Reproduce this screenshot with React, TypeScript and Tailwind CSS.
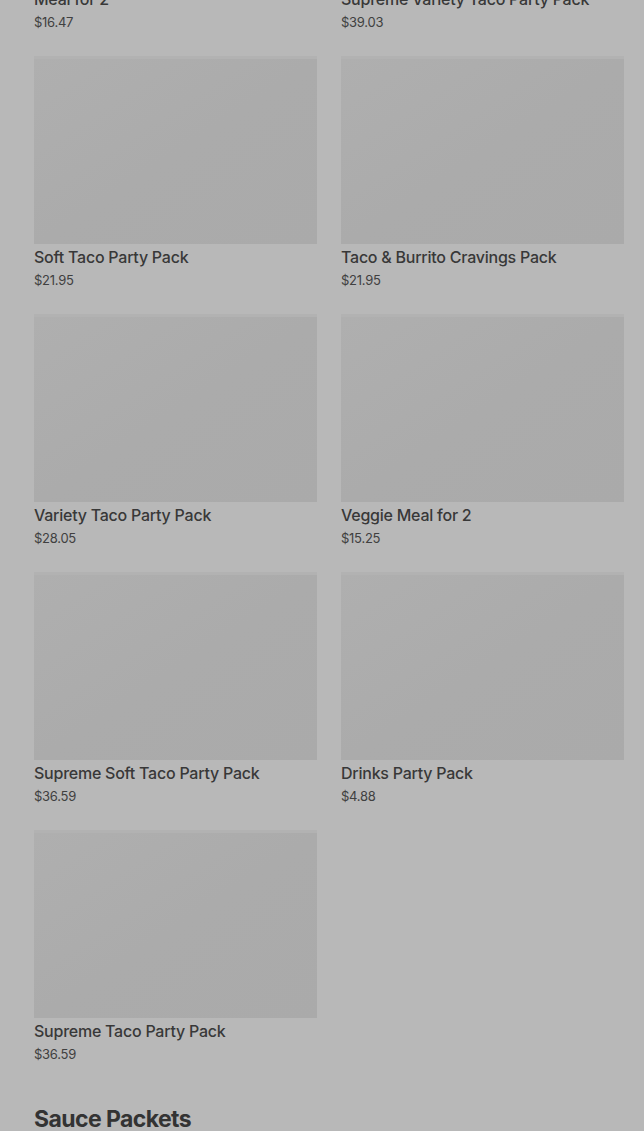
const items = [
  { name: 'Meal for 2', price: '$16.47' },
  { name: 'Supreme Variety Taco Party Pack', price: '$39.03' },
  { name: 'Soft Taco Party Pack', price: '$21.95' },
  { name: 'Taco & Burrito Cravings Pack', price: '$21.95' },
  { name: 'Variety Taco Party Pack', price: '$28.05' },
  { name: 'Veggie Meal for 2', price: '$15.25' },
  { name: 'Supreme Soft Taco Party Pack', price: '$36.59' },
  { name: 'Drinks Party Pack', price: '$4.88' },
  { name: 'Supreme Taco Party Pack', price: '$36.59' },
];

function ProductCard({ name, price }: { name: string; price: string }) {
  return (
    <div className="flex flex-col">
      <div className="h-[188px] w-full bg-gradient-to-br from-[#afafaf] via-[#ababab] to-[#aaaaaa] border-t-[3px] border-[#b2b2b2]" />
      <h3 className="mt-[2px] text-[16px] leading-[22px] font-medium text-[#383838] tracking-[-0.015em]">{name}</h3>
      <p className="mt-[2px] text-[13px] leading-[20px] text-[#404040] tracking-[-0.02em]">{price}</p>
    </div>
  );
}

export default function App() {
  return (
    <div
      className="h-[1131px] w-full overflow-hidden bg-[#b8b8b8]"
      style={{ fontFamily: 'Inter, "Noto Sans", sans-serif' }}
    >
      <div className="pl-[34px] pr-[20px]">
        <div className="-mt-[202px] grid grid-cols-2 gap-x-[24px] gap-y-[24px]">
          {items.map((item) => (
            <ProductCard key={item.name + item.price} name={item.name} price={item.price} />
          ))}
        </div>
        <h2 className="mt-[39px] text-[23px] leading-[32px] font-bold tracking-[-0.025em] text-[#333333]">
          Sauce Packets
        </h2>
      </div>
    </div>
  );
}
